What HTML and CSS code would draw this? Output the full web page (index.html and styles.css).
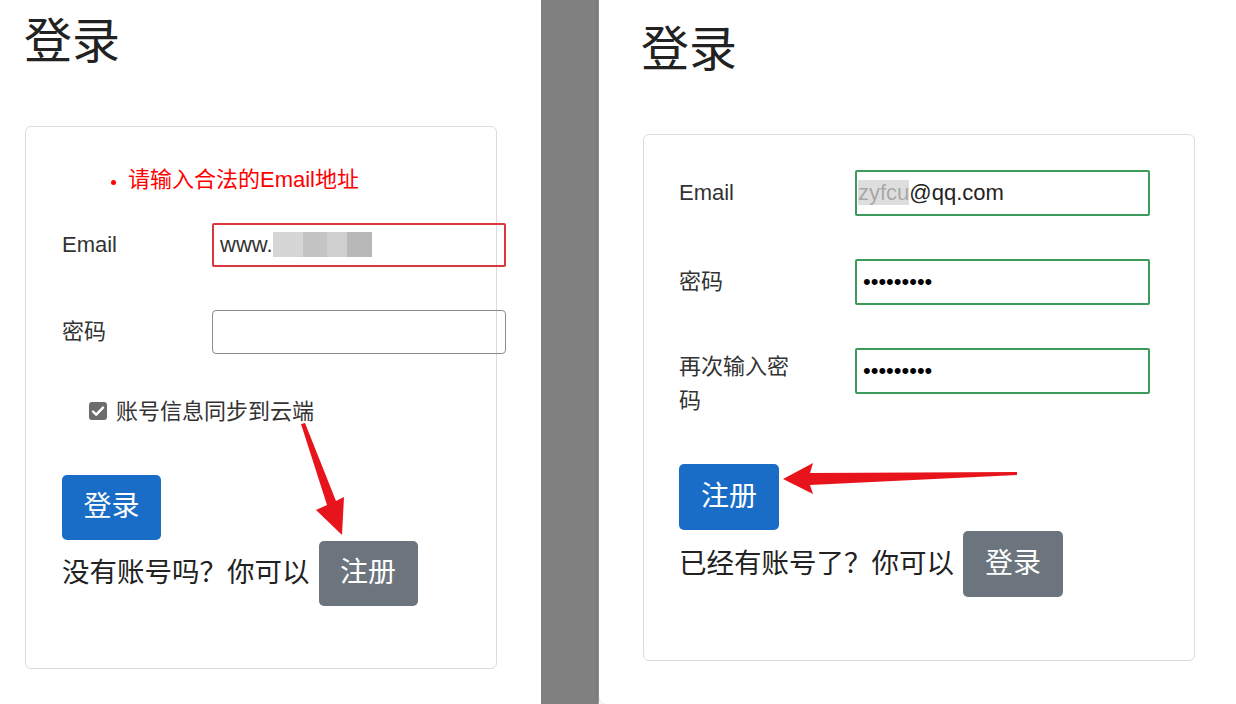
FILE: index.html
```html
<!DOCTYPE html>
<html lang="zh-CN">
<head>
    <meta charset="UTF-8">
    <title>登录 / 注册</title>
    <link rel="stylesheet" href="styles.css">
</head>
<body>
<div class="shot left-shot">
    <h2 class="title">登录</h2>
    <div class="card login-card">
        <ul class="errors">
            <li>请输入合法的Email地址</li>
        </ul>
        <div class="row">
            <label class="label">Email</label>
            <div class="input invalid">www.<span class="mask">zyfcu.com</span></div>
        </div>
        <div class="row pwd">
            <label class="label">密码</label>
            <div class="input"></div>
        </div>
        <div class="check-row">
            <span class="checkbox">
                <svg width="18" height="18" viewBox="0 0 18 18"><path d="M4 9.5l3.2 3.2L14 5.6" fill="none" stroke="#fff" stroke-width="2.4" stroke-linecap="round" stroke-linejoin="round"/></svg>
            </span>
            <span>账号信息同步到云端</span>
        </div>
        <button class="btn btn-primary submit">登录</button>
        <div class="switch">
            <span>没有账号吗？你可以</span>
            <button class="btn btn-secondary">注册</button>
        </div>
    </div>
</div>
<div class="divider"></div>
<div class="shot right-shot">
    <h2 class="title">登录</h2>
    <div class="card register-card">
        <div class="row">
            <label class="label">Email</label>
            <div class="input valid"><span class="mask">zyfcu</span>@qq.com</div>
        </div>
        <div class="row">
            <label class="label">密码</label>
            <div class="input valid dots">•••••••••</div>
        </div>
        <div class="row top">
            <label class="label">再次输入密码</label>
            <div class="input valid dots">•••••••••</div>
        </div>
        <button class="btn btn-primary submit">注册</button>
        <div class="switch">
            <span>已经有账号了？你可以</span>
            <button class="btn btn-secondary">登录</button>
        </div>
    </div>
</div>
<svg class="arrows" width="1236" height="704" viewBox="0 0 1236 704">
    <path d="M301 424 L305 423 L336 501 L344 497 L342 535 L316 510 L327 505 Z" fill="#e8141c"/>
    <path d="M783 479 L813 463 L810 473 L1017 472 L1017 475 L810 485 L813 494 Z" fill="#e8141c"/>
</svg>
</body>
</html>
```

FILE: styles.css
```css
html, body {
    margin: 0;
    height: 704px;
    overflow: hidden;
}

body {
    position: relative;
    display: flex;
    font: 22px/1.5 "Liberation Sans", "Noto Sans CJK SC", sans-serif;
    color: #212529;
    background: #fff;
}

.shot {
    box-sizing: border-box;
    background: #fff;
}

.left-shot {
    width: 541px;
    padding: 0 0 0 25px;
}

.divider {
    width: 57px;
    background: #808080;
    border-right: 1px solid #9a9a9a;
}

.right-shot {
    flex: 1;
    padding: 0 0 0 44px;
    border-radius: 0 0 0 8px;
    box-shadow: -1px 0 3px rgba(0,0,0,0.15);
}

.title {
    margin: 0;
    font-weight: 400;
    font-size: 48px;
    line-height: 1.2;
    color: #222;
}

.left-shot .title {
    margin: 13px 0 0 -1px;
}

.right-shot .title {
    margin: 21px 0 0 -2px;
}

.card {
    box-sizing: border-box;
    border: 1px solid #dcdcdc;
    border-radius: 6px;
    background: #fff;
}

.login-card {
    width: 472px;
    height: 543px;
    margin-top: 55px;
    padding: 36px 0 0 36px;
}

.register-card {
    width: 552px;
    height: 527px;
    margin-top: 55px;
    padding: 35px 0 0 35px;
}

.errors {
    margin: 0 0 27px;
    padding: 0 0 0 66px;
    color: #f00;
    line-height: 33px;
}

.errors li::marker {
    font-size: 18px;
}

.row {
    display: flex;
    align-items: center;
    margin-bottom: 43px;
}

.row.pwd {
    margin-bottom: 41px;
}

.row.top {
    align-items: flex-start;
    margin-bottom: 46px;
}

.row.top .label {
    padding-top: 2px;
}

.label {
    box-sizing: border-box;
    flex: none;
    color: #333;
    line-height: 34px;
}

.login-card .label {
    width: 150px;
}

.register-card .label {
    width: 176px;
    padding-right: 56px;
}

.input {
    box-sizing: border-box;
    flex: none;
    height: 44px;
    padding: 0 6px;
    border: 1px solid #8c8c8c;
    border-radius: 4px;
    line-height: 42px;
    color: #222;
    white-space: nowrap;
    overflow: hidden;
}

.login-card .input {
    width: 294px;
}

.register-card .input {
    width: 295px;
    height: 46px;
    line-height: 42px;
    border-radius: 2px;
}

.input.invalid {
    border: 2px solid #d9363e;
    border-radius: 2px;
    line-height: 40px;
    padding-left: 6px;
    color: #333;
}

.input.valid {
    border: 2px solid #3c9a5a;
    padding-left: 1px;
}

.input.dots {
    padding-left: 6px;
    font-size: 22px;
    color: #000;
}

.mask {
    color: transparent;
    background: linear-gradient(90deg, #d6d6d6 0 30%, #c4c4c4 30% 55%, #d0d0d0 55% 75%, #b8b8b8 75% 100%);
}

.valid .mask {
    background: #dedede;
    color: rgba(60,60,60,0.35);
}

.check-row {
    display: flex;
    align-items: center;
    gap: 9px;
    margin: 0 0 47px 27px;
    line-height: 33px;
    color: #333;
}

.checkbox {
    display: inline-flex;
    width: 18px;
    height: 18px;
    border-radius: 3px;
    background: #6c6c6c;
}

.btn {
    box-sizing: border-box;
    display: block;
    width: 100px;
    height: 66px;
    border: 0;
    border-radius: 5px;
    font: 28px/1 "Liberation Sans", "Noto Sans CJK SC", sans-serif;
    color: #fff;
}

.btn-primary {
    background: #1a6dc6;
}

.btn-secondary {
    background: #6c757d;
}

.submit {
    margin-bottom: 1px;
}

.login-card .submit {
    height: 65px;
    width: 99px;
}

.switch {
    display: flex;
    align-items: center;
    gap: 9px;
    font-size: 27.5px;
    color: #222;
}

.login-card .switch .btn {
    width: 99px;
    height: 65px;
}

.arrows {
    position: absolute;
    left: 0;
    top: 0;
    pointer-events: none;
}
```
